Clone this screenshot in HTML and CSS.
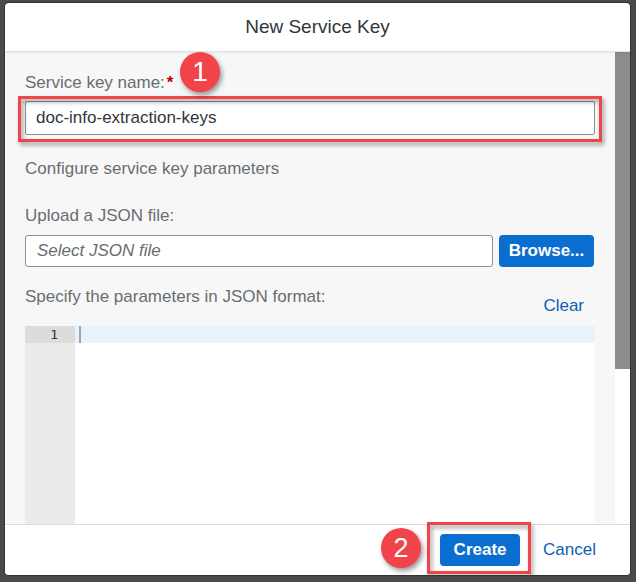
FILE: index.html
```html
<!DOCTYPE html>
<html lang="en">
<head>
<meta charset="utf-8">
<title>New Service Key</title>
<link rel="stylesheet" href="styles.css">
</head>
<body>
<div class="dialog">
  <header class="header">New Service Key</header>
  <div class="body">
    <div class="main">
      <div class="label label-name">Service key name:<span class="req">*</span><span class="badge badge-1">1</span></div>
      <div class="field">
        <input class="input" type="text" value="doc-info-extraction-keys">
        <span class="hl hl-name"></span>
      </div>
      <div class="label section">Configure service key parameters</div>
      <div class="label upload">Upload a JSON file:</div>
      <div class="file-row">
        <div class="input file-input">Select JSON file</div>
        <button class="btn btn-primary browse">Browse...</button>
      </div>
      <div class="spec-row">
        <div class="label">Specify the parameters in JSON format:</div>
        <button class="link clear">Clear</button>
      </div>
      <div class="editor">
        <div class="gutter"><div class="gutter-active">1</div></div>
        <div class="code"><div class="active-line"><span class="cursor"></span></div></div>
      </div>
    </div>
    <div class="scrollbar"><div class="thumb"></div></div>
  </div>
  <footer class="footer">
    <div class="create-wrap">
      <span class="badge badge-2">2</span>
      <button class="btn btn-primary create">Create</button>
      <span class="hl hl-create"></span>
    </div>
    <button class="link cancel">Cancel</button>
  </footer>
</div>
</body>
</html>
```
FILE: styles.css
```css
* { box-sizing: border-box; }
html, body { margin: 0; }
body {
  background: #4a4a4a;
  padding: 3px 0 0 5px;
  height: 582px;
  overflow: hidden;
  font-family: "Liberation Sans", Arial, sans-serif;
  font-size: 17px;
  color: #32363a;
}
.dialog {
  width: 625px;
  height: 572px;
  background: #fff;
  border-radius: 4px;
  box-shadow: 0 0 0 1px #333;
  display: flex;
  flex-direction: column;
  overflow: hidden;
}
.header {
  flex: none;
  height: 49px;
  display: flex;
  align-items: center;
  justify-content: center;
  font-size: 19px;
  color: #32363a;
  border-bottom: 1px solid #e2e2e2;
  position: relative;
  z-index: 1;
  box-shadow: 0 1px 2px rgba(0,0,0,0.06);
}
.body {
  flex: 1;
  min-height: 0;
  display: grid;
  grid-template-columns: 1fr 15px;
  background: #f7f7f7;
  overflow: hidden;
}
.main {
  padding: 21px 20px 0 20px;
  display: flex;
  flex-direction: column;
  min-height: 0;
}
.label {
  line-height: 20px;
  color: #6a6d70;
  position: relative;
}
.label-name { margin-bottom: 8px; }
.req { color: #bb0000; margin-left: 2px; font-weight: bold; }
.badge {
  position: absolute;
  width: 40px;
  height: 40px;
  border-radius: 50%;
  background: #f0434a;
  color: #fff;
  font-size: 28px;
  line-height: 40px;
  text-align: center;
  box-shadow: 2px 3px 5px rgba(0,0,0,0.4);
  z-index: 3;
}
.badge-1 { left: 155px; top: -21px; }
.field { position: relative; }
.input {
  display: block;
  width: 100%;
  height: 34px;
  border: 1px solid #89919a;
  border-radius: 2px;
  background: #fff;
  font-family: inherit;
  font-size: 17px;
  color: #32363a;
  padding: 0 10px;
  outline: none;
  margin: 0;
}
.hl {
  position: absolute;
  border: 3px solid #f0434a;
  filter: drop-shadow(2px 3px 2px rgba(0,0,0,0.4));
  pointer-events: none;
  z-index: 2;
}
.hl-name { left: -7px; right: -7px; top: -5px; bottom: -7px; }
.section { margin-top: 24px; }
.upload { margin-top: 27px; }
.file-row {
  margin-top: 9px;
  display: flex;
  gap: 6px;
}
.file-input {
  flex: 1;
  height: 32px;
  line-height: 30px;
  font-style: italic;
  color: #6a6d70;
  padding: 0 11px;
  border-radius: 3px;
}
.btn {
  font-family: inherit;
  font-size: 17px;
  font-weight: bold;
  border: none;
  border-radius: 4px;
  cursor: pointer;
  padding: 0;
}
.btn-primary { background: #0a6ed1; color: #fff; }
.browse { width: 95px; height: 32px; margin-right: 1px; }
.spec-row {
  margin-top: 20px;
  display: flex;
  justify-content: space-between;
  align-items: flex-start;
}
.link {
  background: none;
  border: none;
  font-family: inherit;
  font-size: 17px;
  color: #0a5fb4;
  padding: 0 11px;
  line-height: 20px;
  cursor: pointer;
}
.clear { margin-top: 9px; }
.editor {
  margin-top: 10px;
  height: 240px;
  flex: none;
  display: grid;
  grid-template-columns: 50px 1fr;
  background: #fff;
}
.gutter { background: #ebebeb; }
.gutter-active {
  height: 17px;
  background: #dcdcdc;
  font-family: "DejaVu Sans Mono", monospace;
  font-size: 13px;
  line-height: 17px;
  text-align: right;
  padding-right: 17px;
  color: #333;
}
.active-line {
  height: 17px;
  background: #e8f2fd;
  padding-left: 4px;
}
.cursor {
  display: block;
  width: 2px;
  height: 17px;
  background: #9aa7b8;
}
.scrollbar { background: #fff; }
.thumb { height: 317px; background: #8c8c8c; }
.footer {
  flex: none;
  height: 51px;
  border-top: 1px solid #d9d9d9;
  display: flex;
  justify-content: flex-end;
  align-items: center;
  gap: 15px;
  padding-right: 26px;
  background: #fff;
  position: relative;
}
.create-wrap { position: relative; }
.create { width: 80px; height: 32px; display: block; }
.hl-create { left: -13px; right: -11px; top: -12px; bottom: -8px; }
.badge-2 { left: -59px; top: -6px; font-size: 27px; }
.cancel { padding: 0 8px; }
```
